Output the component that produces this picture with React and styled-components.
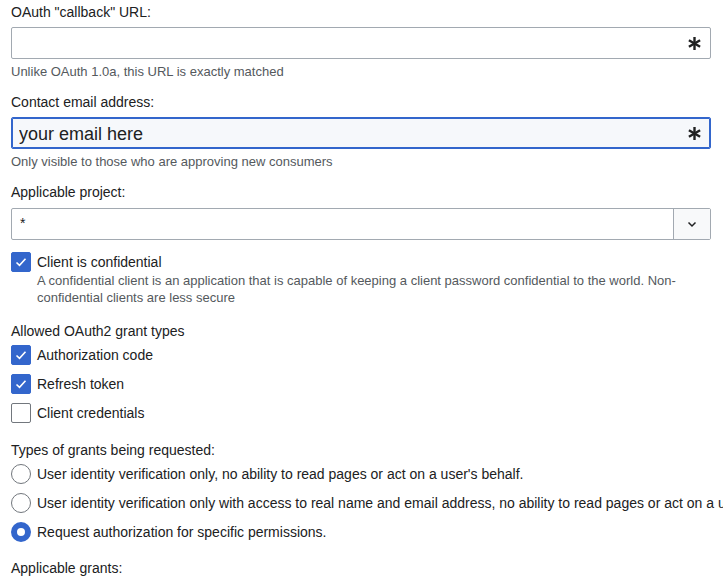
import React from "react";
import styled, { createGlobalStyle } from "styled-components";

const GlobalStyle = createGlobalStyle`
  html, body {
    margin: 0;
    padding: 0;
    background: #fff;
    overflow: hidden;
  }
  body {
    font-family: "Liberation Sans", Arial, sans-serif;
    color: #202122;
  }
`;

const Page = styled.div`
  padding: 1px 12px 0 11px;
  width: 700px;
`;

const Field = styled.div`
  margin-bottom: ${(p) => p.gap || 11}px;
`;

const Label = styled.div`
  font-size: 14px;
  line-height: 22px;
  white-space: nowrap;
`;

const Help = styled.div`
  margin-top: 4px;
  font-size: 13px;
  line-height: 17px;
  color: #54595d;
`;

const InputWrap = styled.div`
  position: relative;
  margin-top: 4px;
  height: 32px;
  box-sizing: border-box;
  border: 1px solid ${(p) => (p.focused ? "#36c" : "#a2a9b1")};
  box-shadow: ${(p) => (p.focused ? "inset 0 0 0 1px #36c" : "none")};
  border-radius: 2px;
  background: ${(p) => (p.focused ? "#f6f8fb" : "#fff")};
  display: flex;
  align-items: center;
`;

const TextInput = styled.input`
  flex: 1;
  height: 100%;
  border: none;
  outline: none;
  background: transparent;
  padding: 2px 32px 0 7px;
  font-family: "Liberation Sans", Arial, sans-serif;
  font-size: 18px;
  color: #202122;
`;

const Required = styled.span`
  position: absolute;
  right: 9px;
  top: 9px;
  width: 13px;
  height: 13px;
  display: flex;
`;

const SelectBox = styled.div`
  margin-top: 5px;
  height: 32px;
  box-sizing: border-box;
  border: 1px solid #a2a9b1;
  border-radius: 2px;
  display: flex;
  background: #fff;
`;

const SelectValue = styled.div`
  flex: 1;
  padding-left: 8px;
  font-size: 14px;
  line-height: 28px;
`;

const SelectButton = styled.div`
  width: 36px;
  border-left: 1px solid #a2a9b1;
  background: #f8f9fa;
  display: flex;
  align-items: center;
  justify-content: center;
`;

const OptionList = styled.div`
  display: flex;
  flex-direction: column;
  gap: 9px;
  margin-top: ${(p) => p.top || 4}px;
`;

const Option = styled.label`
  display: flex;
  align-items: flex-start;
  gap: 6px;
`;

const Box = styled.span`
  flex: none;
  width: 20px;
  height: 20px;
  box-sizing: border-box;
  border-radius: 2px;
  border: 1px solid ${(p) => (p.checked ? "#36c" : "#72777d")};
  background: ${(p) => (p.checked ? "#36c" : "#fff")};
  display: flex;
  align-items: center;
  justify-content: center;
`;

const Radio = styled.span`
  flex: none;
  width: 20px;
  height: 20px;
  box-sizing: border-box;
  border-radius: 50%;
  border: ${(p) => (p.checked ? "6px solid #36c" : "1px solid #72777d")};
  background: #fff;
`;

const OptionBody = styled.div`
  display: flex;
  flex-direction: column;
`;

const OptionText = styled.span`
  font-size: 14px;
  line-height: 20px;
  white-space: nowrap;
`;

const OptionHelp = styled.div`
  font-size: 13px;
  line-height: 17px;
  color: #54595d;
  max-width: 645px;
`;

const Asterisk = () => (
  <svg width="13" height="13" viewBox="0 0 13 13">
    <g stroke="#202122" strokeWidth="2.4" strokeLinecap="butt">
      <line x1="6.5" y1="0" x2="6.5" y2="13" />
      <line x1="0.9" y1="3.25" x2="12.1" y2="9.75" />
      <line x1="0.9" y1="9.75" x2="12.1" y2="3.25" />
    </g>
  </svg>
);

const Check = () => (
  <svg width="14" height="14" viewBox="0 0 14 14">
    <path d="M2.5 7.5 L5.5 10.3 L11.5 3.7" fill="none" stroke="#fff" strokeWidth="1.6" />
  </svg>
);

const Chevron = () => (
  <svg width="12" height="12" viewBox="0 0 12 12">
    <path d="M2.5 4.5 L6 8 L9.5 4.5" fill="none" stroke="#202122" strokeWidth="1.5" />
  </svg>
);

const Checkbox = ({ checked, label, help }) => (
  <Option>
    <Box checked={checked}>{checked && <Check />}</Box>
    <OptionBody>
      <OptionText>{label}</OptionText>
      {help && <OptionHelp>{help}</OptionHelp>}
    </OptionBody>
  </Option>
);

const RadioOption = ({ checked, label }) => (
  <Option>
    <Radio checked={checked} />
    <OptionText>{label}</OptionText>
  </Option>
);

const grantTypes = [
  { label: "Authorization code", checked: true },
  { label: "Refresh token", checked: true },
  { label: "Client credentials", checked: false },
];

const grantRequests = [
  { label: "User identity verification only, no ability to read pages or act on a user's behalf.", checked: false },
  { label: "User identity verification only with access to real name and email address, no ability to read pages or act on a user's behalf.", checked: false },
  { label: "Request authorization for specific permissions.", checked: true },
];

export default function App() {
  return (
    <>
      <GlobalStyle />
      <Page>
        <Field>
          <Label>OAuth "callback" URL:</Label>
          <InputWrap>
            <TextInput type="text" defaultValue="" />
            <Required><Asterisk /></Required>
          </InputWrap>
          <Help>Unlike OAuth 1.0a, this URL is exactly matched</Help>
        </Field>

        <Field>
          <Label>Contact email address:</Label>
          <InputWrap focused>
            <TextInput type="text" defaultValue="your email here" />
            <Required><Asterisk /></Required>
          </InputWrap>
          <Help>Only visible to those who are approving new consumers</Help>
        </Field>

        <Field gap={12}>
          <Label>Applicable project:</Label>
          <SelectBox>
            <SelectValue>*</SelectValue>
            <SelectButton><Chevron /></SelectButton>
          </SelectBox>
        </Field>

        <Field gap={14}>
          <Checkbox
            checked
            label="Client is confidential"
            help="A confidential client is an application that is capable of keeping a client password confidential to the world. Non-confidential clients are less secure"
          />
        </Field>

        <Field gap={16}>
          <Label>Allowed OAuth2 grant types</Label>
          <OptionList top={3}>
            {grantTypes.map((g) => (
              <Checkbox key={g.label} checked={g.checked} label={g.label} />
            ))}
          </OptionList>
        </Field>

        <Field gap={15}>
          <Label>Types of grants being requested:</Label>
          <OptionList top={3}>
            {grantRequests.map((g) => (
              <RadioOption key={g.label} checked={g.checked} label={g.label} />
            ))}
          </OptionList>
        </Field>

        <Field>
          <Label>Applicable grants:</Label>
        </Field>
      </Page>
    </>
  );
}
